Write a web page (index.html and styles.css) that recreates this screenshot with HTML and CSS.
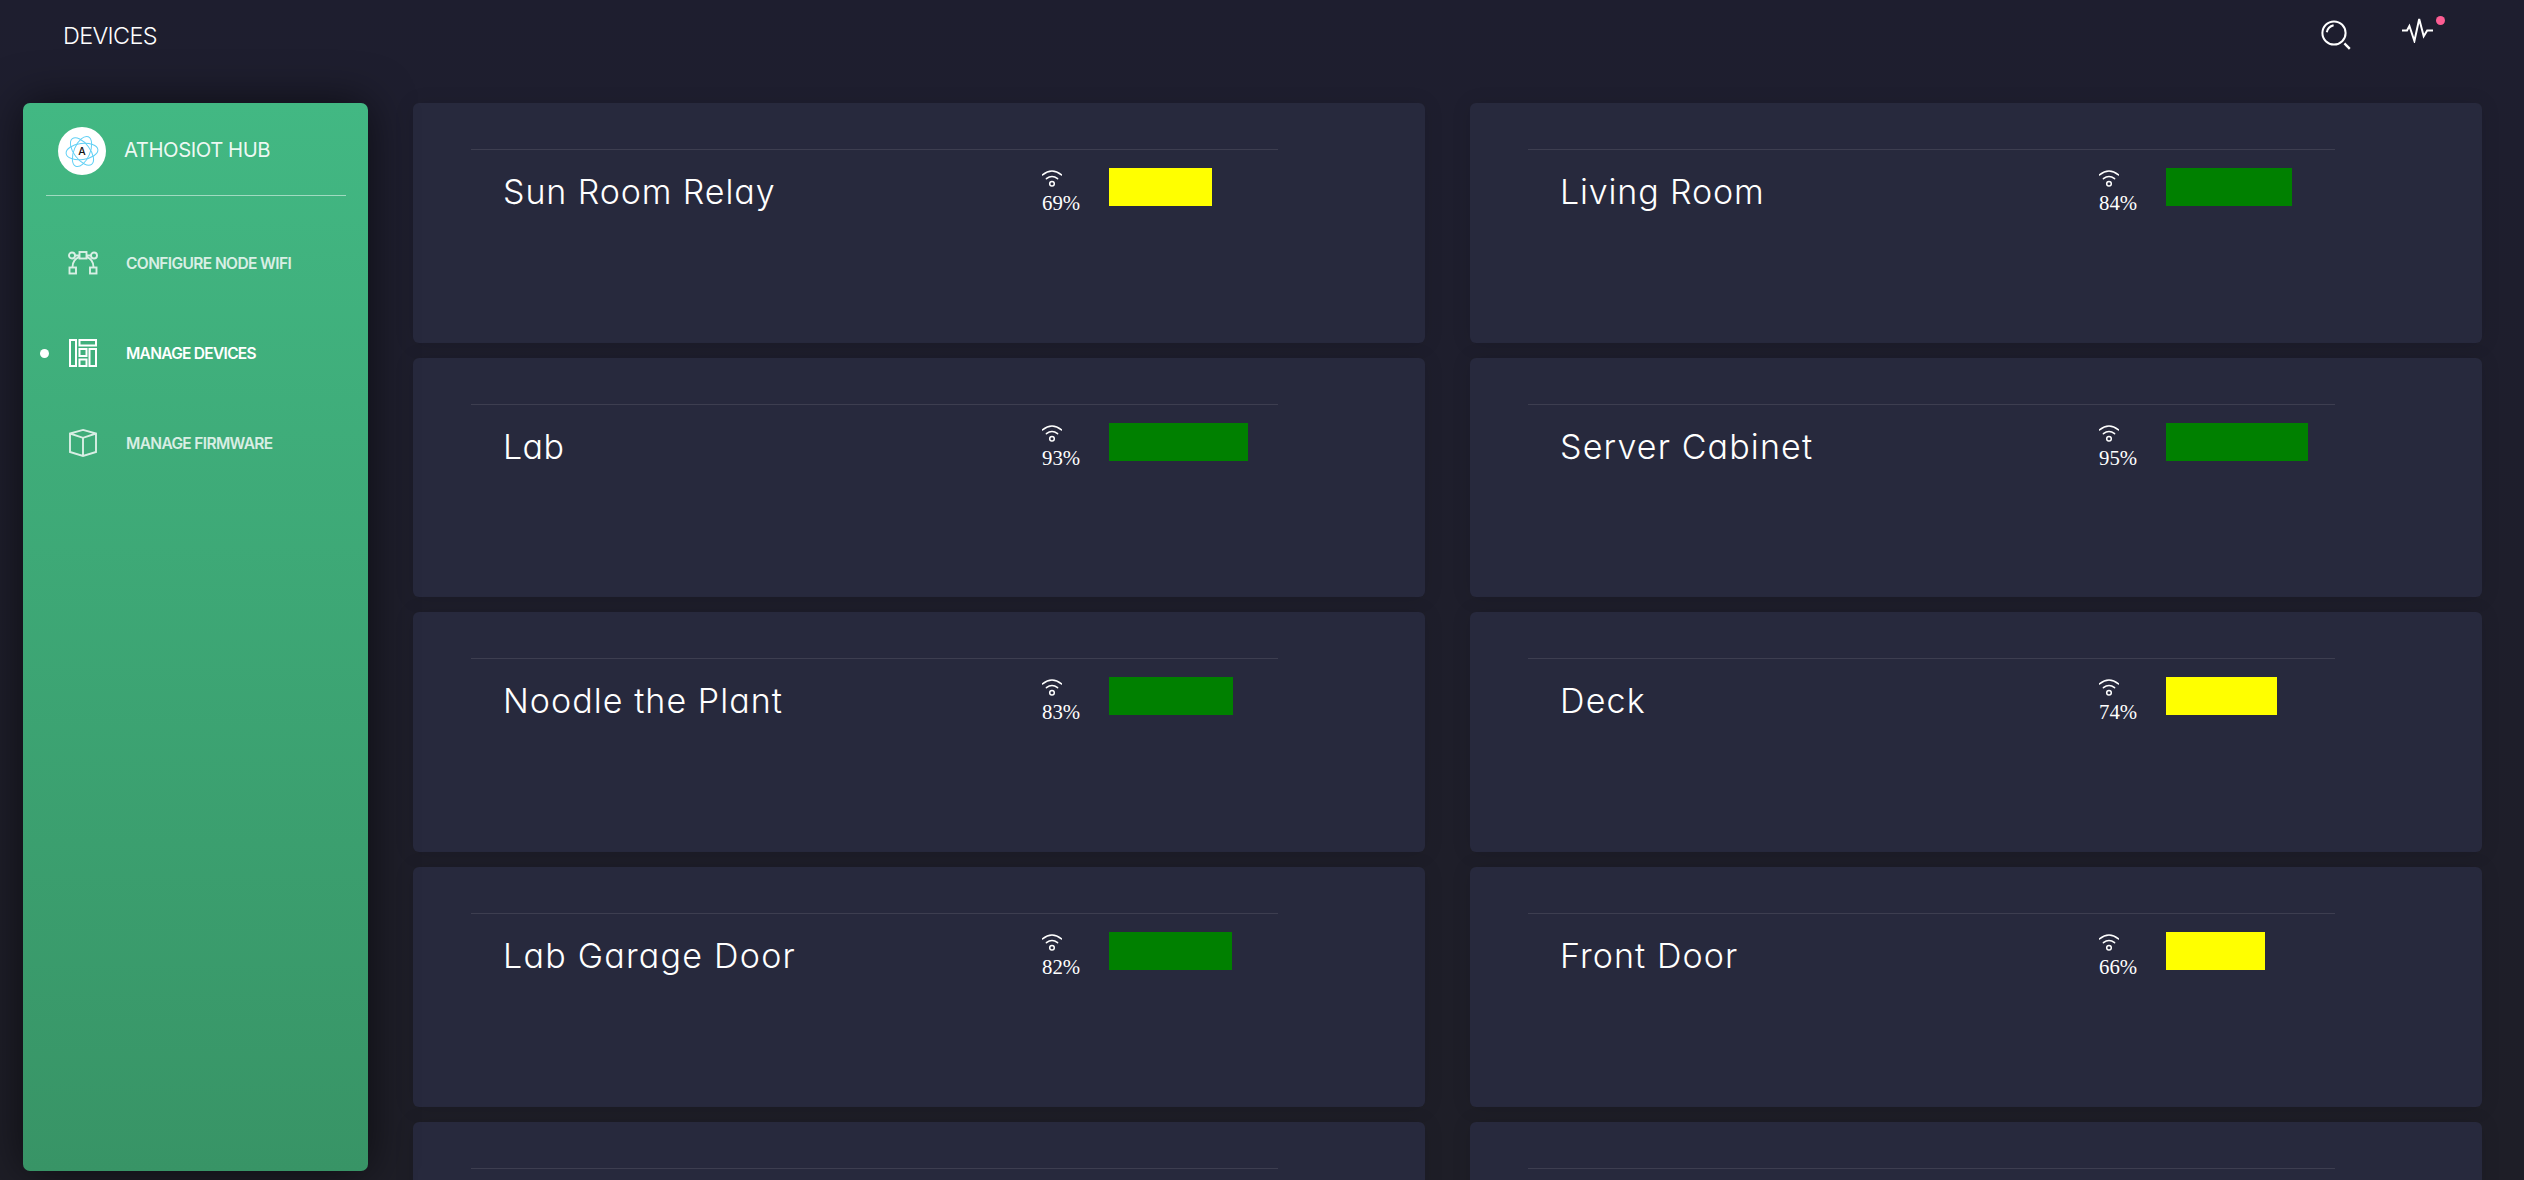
FILE: index.html
```html
<!DOCTYPE html>
<html lang="en">
<head>
<meta charset="utf-8">
<title>Devices</title>
<link rel="stylesheet" href="styles.css">
</head>
<body>
<svg class="sprite" width="0" height="0" aria-hidden="true">
  <symbol id="wifi" viewBox="0 0 20 17">
    <g fill="none" stroke="#fff" stroke-width="1.5">
      <path d="M.5 4.9Q10-2.9 19.5 4.9" stroke-linecap="round"/>
      <path d="M4.4 8.7Q10 4.2 15.6 8.7" stroke-linecap="round"/>
      <circle cx="10" cy="13.7" r="2.3"/>
    </g>
  </symbol>
</svg>
<header class="topbar">
  <h1 class="page-title">DEVICES</h1>
  <nav class="actions">
    <svg class="search" viewBox="0 0 30 30"><g fill="none" stroke="#fff" stroke-width="2"><circle cx="13" cy="13" r="11.6"/><path d="M5.8 12.2q1-5.4 6.8-6.9"/><path d="M23.4 23.4l5.4 5.4" stroke-width="2.4"/></g></svg>
    <span class="activity">
      <svg viewBox="0 0 31 26"><path d="M0 13.5h5L7.4 9l5 15 4.8-22 4.5 17.2 3.5-5.7H31" fill="none" stroke="#fff" stroke-width="2"/></svg>
      <span class="alert"></span>
    </span>
  </nav>
</header>
<div class="layout">
  <aside class="sidebar">
    <div class="brand">
      <span class="logo"><svg viewBox="0 0 48 48">
        <g fill="none" stroke="#61d0f5" stroke-width="1">
          <ellipse cx="24" cy="24.500" rx="16" ry="8" transform="rotate(-7 24 24.500)"/>
          <ellipse cx="24" cy="24.500" rx="16" ry="8" transform="rotate(53 24 24.500)"/>
          <ellipse cx="24" cy="24.500" rx="16" ry="8" transform="rotate(113 24 24.500)"/>
        </g>
        <text class="logo-letter" x="24" y="28" text-anchor="middle">A</text>
      </svg></span>
      <span class="brand-name">ATHOSIOT HUB</span>
    </div>
    <ul class="menu">
      <li class="item configure">
        <svg viewBox="0 0 30 30"><g fill="none" stroke="#fff" stroke-width="1.9"><circle cx="4" cy="7.500" r="3"/><circle cx="26" cy="7.500" r="3"/><rect x="11.500" y="4" width="7" height="6.500"/><path d="M7 7.500h4.500M18.500 7.500H23M11.500 8.800C7 10.500 4.500 14 4.500 19M18.500 8.800c4.500 1.700 7 5.200 7 10.200"/><rect x="1.500" y="19.500" width="6.500" height="6"/><rect x="22" y="19.500" width="6.500" height="6"/></g></svg>
        <span>CONFIGURE NODE WIFI</span>
      </li>
      <li class="item active devices">
        <svg viewBox="0 0 30 30"><g fill="none" stroke="#fff" stroke-width="2"><rect x="2" y="2" width="6" height="26"/><rect x="11.500" y="2" width="16.500" height="5.500"/><rect x="11.500" y="11" width="7" height="7"/><rect x="11.500" y="21.500" width="7" height="6.500"/><rect x="21.500" y="11" width="6.500" height="17"/></g></svg>
        <span>MANAGE DEVICES</span>
      </li>
      <li class="item firmware">
        <svg viewBox="0 0 30 30"><g fill="none" stroke="#fff" stroke-width="1.9"><path d="M15 1.900L28 5.500V24l-13 4L2 24V5.500zM2 5.500l13 4.300 13-4.300M15 9.800V28"/></g></svg>
        <span>MANAGE FIRMWARE</span>
      </li>
    </ul>
  </aside>
  <main class="cards">
    <section class="card"><div class="row"><h2 class="name sun">Sun Room Relay</h2><div class="signal"><svg><use href="#wifi"/></svg><span>69%</span></div><div class="bar fair" style="width:103px"></div></div></section>
    <section class="card"><div class="row"><h2 class="name living">Living Room</h2><div class="signal"><svg><use href="#wifi"/></svg><span>84%</span></div><div class="bar" style="width:126px"></div></div></section>
    <section class="card"><div class="row"><h2 class="name lab">Lab</h2><div class="signal"><svg><use href="#wifi"/></svg><span>93%</span></div><div class="bar" style="width:139px"></div></div></section>
    <section class="card"><div class="row"><h2 class="name server">Server Cabinet</h2><div class="signal"><svg><use href="#wifi"/></svg><span>95%</span></div><div class="bar" style="width:142px"></div></div></section>
    <section class="card"><div class="row"><h2 class="name noodle">Noodle the Plant</h2><div class="signal"><svg><use href="#wifi"/></svg><span>83%</span></div><div class="bar" style="width:124px"></div></div></section>
    <section class="card"><div class="row"><h2 class="name deck">Deck</h2><div class="signal"><svg><use href="#wifi"/></svg><span>74%</span></div><div class="bar fair" style="width:111px"></div></div></section>
    <section class="card"><div class="row"><h2 class="name garage">Lab Garage Door</h2><div class="signal"><svg><use href="#wifi"/></svg><span>82%</span></div><div class="bar" style="width:123px"></div></div></section>
    <section class="card"><div class="row"><h2 class="name front">Front Door</h2><div class="signal"><svg><use href="#wifi"/></svg><span>66%</span></div><div class="bar fair" style="width:99px"></div></div></section>
    <section class="card"><div class="row"></div></section>
    <section class="card"><div class="row"></div></section>
  </main>
</div>
</body>
</html>
```
FILE: styles.css
```css
* { box-sizing: border-box; }
body {
  margin: 0;
  height: 1180px;
  overflow: hidden;
  background: linear-gradient(#1e1e2f, #1e1e24 1600px);
  color: #fff;
  font-family: Inter, sans-serif;
  font-feature-settings: "cv11";
}
.sprite { display: block; }
svg { flex: none; }

.topbar {
  height: 103px;
  padding: 15px 79px 0 63px;
  display: flex;
  justify-content: space-between;
  align-items: flex-start;
}
.page-title {
  margin: 1px 0 0;
  font-size: 23.4px;
  line-height: 40px;
  font-weight: 300;
  letter-spacing: -0.65px;
}
.actions { display: flex; gap: 51px; }
.search { width: 30px; height: 30px; margin-top: 5px; }
.activity { position: relative; width: 43px; height: 30px; }
.activity svg { width: 31px; height: 26px; margin-top: 2px; }
.alert {
  position: absolute;
  left: 34px;
  top: 1px;
  width: 9px;
  height: 9px;
  border-radius: 50%;
  background: #fd5d93;
}

.layout { display: flex; gap: 45px; padding-left: 23px; }
.sidebar {
  position: relative;
  z-index: 1;
  flex: none;
  width: 345px;
  height: 1068px;
  border-radius: 7px;
  background: linear-gradient(#42b883, #389466);
  box-shadow: 0 0 45px rgba(0, 0, 0, .6);
}
.brand {
  margin: 0 22px 0 23px;
  height: 93px;
  padding: 24px 0 0 12px;
  display: flex;
  gap: 18px;
  border-bottom: 1px solid rgba(255, 255, 255, .5);
}
.logo { width: 48px; height: 48px; border-radius: 50%; background: #fff; }
.logo svg { display: block; }
.logo-letter { font: 500 10.5px Inter, sans-serif; fill: #111; }
.brand-name { font-size: 20.3px; line-height: 46px; letter-spacing: -0.45px; color: rgba(255, 255, 255, .92); }
.menu { list-style: none; margin: 22px 0 0; padding: 0; }
.item {
  position: relative;
  height: 90px;
  padding-left: 45px;
  display: flex;
  align-items: center;
  gap: 28px;
  font-size: 15.5px;
  font-weight: 600;
  white-space: nowrap;
}
.item > * { opacity: .8; }
.item.active > * { opacity: 1; }
.item svg { width: 30px; height: 30px; }
.configure { letter-spacing: -0.6px; }
.devices { letter-spacing: -0.72px; }
.firmware { letter-spacing: -0.65px; }
.item.active::before {
  content: "";
  position: absolute;
  left: 17px;
  top: 41px;
  width: 9px;
  height: 9px;
  border-radius: 50%;
  background: #fff;
}

.cards {
  display: grid;
  grid-template-columns: 1012px 1012px;
  grid-auto-rows: 239.7px;
  gap: 15px 45px;
}
.card {
  padding: 46px 0 0 58px;
  border-radius: 6px;
  background: #27293d;
  box-shadow: 0 1px 20px rgba(0, 0, 0, .1);
}
.row {
  width: 807px;
  padding: 18px 0 0 33px;
  display: flex;
  align-items: flex-start;
  border-top: 1px solid rgba(255, 255, 255, .1);
}
.name {
  margin: 4px 0 0 -1px;
  width: 539px;
  font-size: 34px;
  line-height: 40px;
  font-weight: 300;
  white-space: nowrap;
}
.sun { letter-spacing: .9px; }
.living { letter-spacing: .85px; }
.lab { letter-spacing: .4px; }
.server { letter-spacing: 1.15px; }
.noodle { letter-spacing: 1.05px; }
.deck { letter-spacing: 1.2px; }
.garage { letter-spacing: 1.25px; }
.front { letter-spacing: 1.1px; }
.signal { width: 67px; display: flex; flex-direction: column; }
.signal svg { width: 20px; height: 17px; margin: 2px 0 4px; }
.signal span { font: 20.8px/24px "Liberation Serif", serif; }
.bar { height: 38px; background: green; }
.bar.fair { background: yellow; }
```
